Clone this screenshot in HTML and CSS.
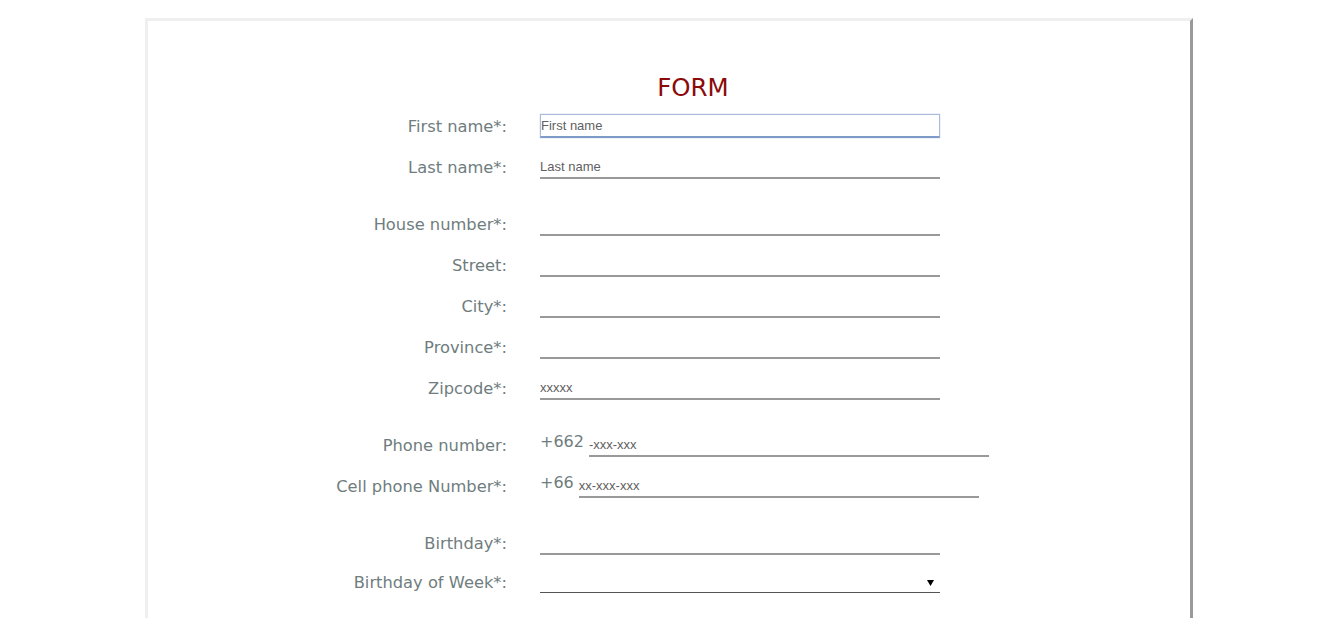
FILE: index.html
```html
<!DOCTYPE html>
<html lang="en">
<head>
<meta charset="utf-8">
<title>Form</title>
<link rel="stylesheet" href="styles.css">
</head>
<body>
<div class="page">
  <h1 class="title">FORM</h1>
  <form class="form">
    <div class="row">
      <label class="label" for="fn">First name*:</label>
      <input id="fn" class="field focused" type="text" placeholder="First name">
    </div>
    <div class="row">
      <label class="label" for="ln">Last name*:</label>
      <input id="ln" class="field" type="text" placeholder="Last name">
    </div>

    <div class="row group">
      <label class="label" for="hn">House number*:</label>
      <input id="hn" class="field" type="text">
    </div>
    <div class="row">
      <label class="label" for="st">Street:</label>
      <input id="st" class="field" type="text">
    </div>
    <div class="row">
      <label class="label" for="ci">City*:</label>
      <input id="ci" class="field" type="text">
    </div>
    <div class="row">
      <label class="label" for="pr">Province*:</label>
      <input id="pr" class="field" type="text">
    </div>
    <div class="row">
      <label class="label" for="zc">Zipcode*:</label>
      <input id="zc" class="field" type="text" placeholder="xxxxx">
    </div>

    <div class="row group">
      <label class="label" for="ph">Phone number:</label>
      <span class="prefix">+662</span>
      <input id="ph" class="field" type="text" placeholder="-xxx-xxx">
    </div>
    <div class="row">
      <label class="label" for="cp">Cell phone Number*:</label>
      <span class="prefix">+66</span>
      <input id="cp" class="field" type="text" placeholder="xx-xxx-xxx">
    </div>

    <div class="row group">
      <label class="label" for="bd">Birthday*:</label>
      <input id="bd" class="field" type="text">
    </div>
    <div class="row row-last">
      <label class="label" for="bw">Birthday of Week*:</label>
      <span class="select-wrap">
        <select id="bw" class="select">
          <option></option>
          <option>Sunday</option>
          <option>Monday</option>
          <option>Tuesday</option>
          <option>Wednesday</option>
          <option>Thursday</option>
          <option>Friday</option>
          <option>Saturday</option>
        </select>
        <svg class="arrow" width="7" height="6" viewBox="0 0 7 6" aria-hidden="true"><path d="M0 0 H7 L3.5 6 Z" fill="#000"/></svg>
      </span>
    </div>
  </form>
</div>
</body>
</html>
```

FILE: styles.css
```css
html, body {
  margin: 0;
  padding: 0;
  background: #ffffff;
}

body {
  font-family: "DejaVu Sans", Verdana, sans-serif;
}

.page {
  margin: 18px 0 0 145px;
  width: 1042px;
  height: 700px;
  background: #ffffff;
  border-top: 3px solid #efefef;
  border-left: 3px solid #efefef;
  border-right: 3px solid #9a9a9a;
  padding-top: 50px;
  box-sizing: content-box;
}

.title {
  margin: 0;
  padding-left: 48px;
  height: 34px;
  line-height: 34px;
  text-align: center;
  font-size: 24.5px;
  font-weight: normal;
  color: #8b0a0a;
}

.form {
  margin: 0;
}

.row {
  display: flex;
  align-items: center;
  height: 41px;
}

.row.group {
  margin-top: 16px;
}

.row-last {
  height: 37px;
}

.label {
  width: 359px;
  margin-right: 33px;
  text-align: right;
  font-size: 16.3px;
  color: #6f7d7e;
  flex: none;
  position: relative;
  top: 1px;
}

.prefix {
  font-size: 16px;
  color: #6f7d7e;
  margin-right: 5px;
  position: relative;
  top: -3px;
}

.field {
  width: 400px;
  height: 24px;
  box-sizing: border-box;
  margin: 0;
  padding: 1px 0 0 0;
  border: none;
  border-bottom: 2px solid #999999;
  background: transparent;
  font-family: "Liberation Sans", Arial, sans-serif;
  font-size: 13px;
  color: #333;
  outline: none;
  flex: none;
}

.field::placeholder {
  color: #5f5f5f;
}

.field.focused {
  border: 1px solid #a8bcd9;
  border-bottom: 2px solid #7f9bc8;
  box-shadow: 0 0 1px #9fb6dc;
  padding: 0;
}

.select-wrap {
  position: relative;
  display: inline-block;
  width: 400px;
  height: 22px;
}

.select {
  appearance: none;
  -webkit-appearance: none;
  width: 400px;
  height: 22px;
  margin: 0;
  padding: 0;
  border: none;
  border-bottom: 1px solid #555555;
  border-radius: 0;
  background: transparent;
  font-family: "Liberation Sans", Arial, sans-serif;
  font-size: 13px;
  outline: none;
}

.arrow {
  position: absolute;
  right: 6px;
  top: 9px;
  pointer-events: none;
}
```
